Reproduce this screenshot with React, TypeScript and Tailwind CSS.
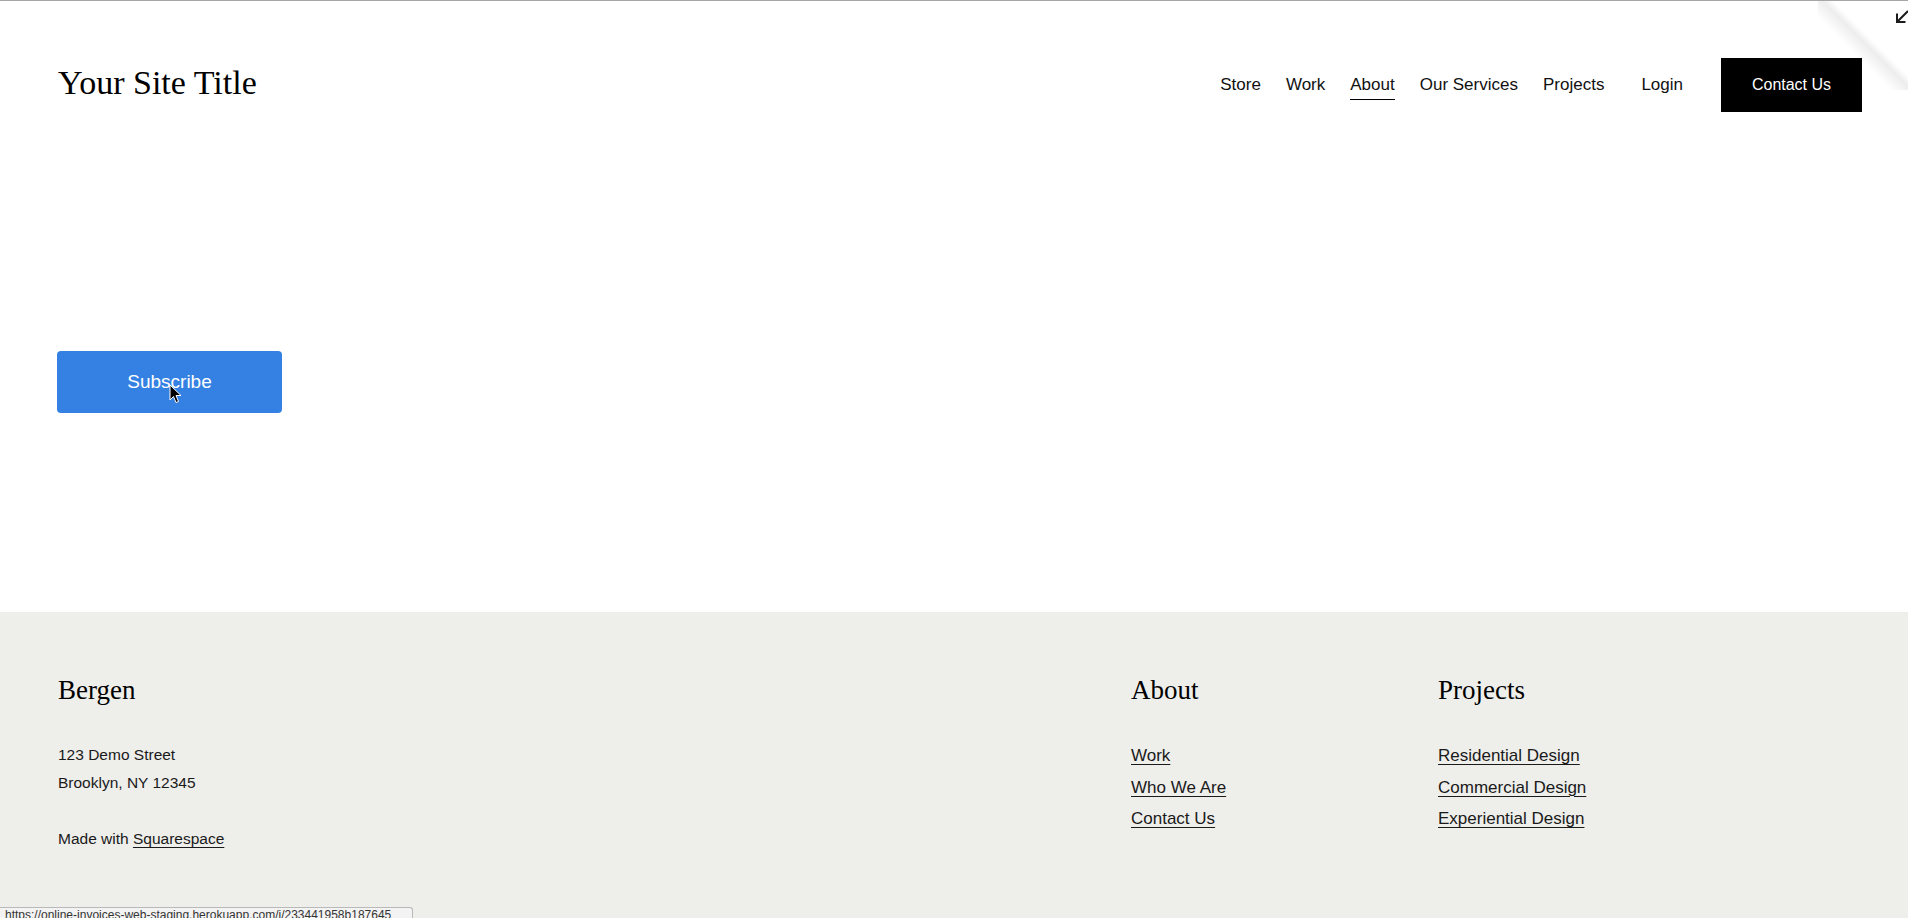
import React from 'react';

const serif = "font-['Liberation_Serif','Times_New_Roman',serif]";
const sans = "font-['Liberation_Sans',Arial,sans-serif]";

const navLinks = ['Store', 'Work', 'About', 'Our Services', 'Projects'];

const aboutLinks = ['Work', 'Who We Are', 'Contact Us'];
const projectLinks = ['Residential Design', 'Commercial Design', 'Experiential Design'];

function FooterColumn({ title, links, className }: { title: string; links: string[]; className?: string }) {
  return (
    <div className={className}>
      <h3 className={`${serif} text-[27px] leading-[1.2] text-black`}>{title}</h3>
      <ul className="mt-[39px] flex flex-col gap-[9.5px]">
        {links.map(link => (
          <li key={link} className={`${sans} text-[17px] leading-[22px] text-[#1a1a1a]`}>
            <a className="underline decoration-1 underline-offset-[3px]">{link}</a>
          </li>
        ))}
      </ul>
    </div>
  );
}

export default function App() {
  return (
    <div className="relative flex h-[918px] flex-col overflow-hidden border-t border-[#a6a6a6] bg-white">
      {/* header */}
      <header className="flex h-[111px] items-center pl-[58px] pr-[46px] pt-[56px]">
        <h1 className={`${serif} mb-[4px] text-[34px] leading-none text-black`}>Your Site Title</h1>
        <nav className={`${sans} ml-auto flex items-center text-[17px] leading-[20px] text-[#111]`}>
          {navLinks.map(link => (
            <a
              key={link}
              className={`mr-[25px] border-b pb-[4px] pt-[5px] ${link === 'About' ? 'border-black' : 'border-transparent'}`}
            >
              {link}
            </a>
          ))}
          <a className="ml-[12px] border-b border-transparent pb-[4px] pt-[5px]">Login</a>
          <a className="ml-[38px] flex h-[54px] w-[141px] items-center justify-center bg-black text-[16px] text-white">
            Contact Us
          </a>
        </nav>
      </header>

      {/* content */}
      <main className="h-[500px] px-[57px] pt-[239px]">
        <button className={`${sans} flex h-[62px] w-[225px] items-center justify-center rounded-[4px] bg-[#3581e3] text-[19px] text-white`}>
          Subscribe
        </button>
      </main>

      {/* footer */}
      <footer className="flex flex-1 bg-[#eeeeeb] pl-[58px] pr-[46px] pt-[62px]">
        <div className="flex-1">
          <h3 className={`${serif} text-[27px] leading-[1.2] text-black`}>Bergen</h3>
          <div className={`${sans} mt-[35px] text-[15.5px] leading-[28px] text-[#1a1a1a]`}>
            <p>123 Demo Street</p>
            <p>Brooklyn, NY 12345</p>
            <p className="mt-[28px]">
              Made with <a className="underline decoration-1 underline-offset-[3px]">Squarespace</a>
            </p>
          </div>
        </div>
        <FooterColumn title="About" links={aboutLinks} className="w-[307px]" />
        <FooterColumn title="Projects" links={projectLinks} className="w-[424px]" />
      </footer>

      {/* corner fold */}
      <div className="absolute right-0 top-[-1px] h-[90px] w-[90px] bg-[linear-gradient(225deg,#ffffff_42%,rgba(0,0,0,0.07)_48%,rgba(255,255,255,0)_60%)]" />
      <svg className="absolute left-[1895px] top-[9px]" width="14" height="14" viewBox="0 0 14 14" fill="none">
        <path d="M13 1 L2.5 11.5 M2 3.5 L2 12 L10.5 12" stroke="#1c1c1c" strokeWidth="2" />
      </svg>

      {/* cursor */}
      <svg className="absolute left-[169px] top-[383px]" width="13" height="20" viewBox="0 0 13 20">
        <path d="M1 1 L1 16 L4.5 12.5 L7 18.5 L9.5 17.5 L7 11.5 L12 11.5 Z" fill="#000" stroke="#fff" strokeWidth="1" />
      </svg>

      {/* status bar */}
      <div className={`${sans} absolute bottom-0 left-0 h-[11px] w-[413px] overflow-hidden rounded-tr-[3px] border border-l-0 border-b-0 border-[#b9b9b9] bg-[#f3f3f3] pl-[5px] text-[12px] leading-[14px] text-[#333]`}>
        https://online-invoices-web-staging.herokuapp.com/i/233441958b187645
      </div>
    </div>
  );
}
